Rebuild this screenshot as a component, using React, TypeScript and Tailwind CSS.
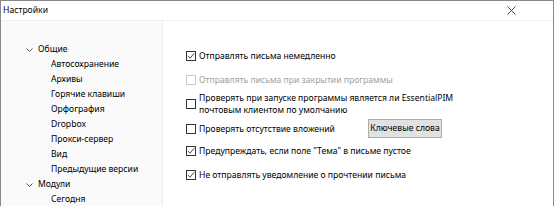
import React from "react";

const font = { fontFamily: '"Noto Sans", "Open Sans", sans-serif' };

function Check({ checked, disabled }: { checked?: boolean; disabled?: boolean }) {
  return (
    <span
      className={`flex h-[10px] w-[10px] shrink-0 items-center justify-center border bg-white ${
        disabled ? "border-[#cccccc]" : "border-[#333333]"
      }`}
    >
      {checked && (
        <svg width="8" height="8" viewBox="0 0 8 8">
          <path d="M0.8 3.8 L3 6.2 L7.3 1.2" fill="none" stroke="#333" strokeWidth="0.9" />
        </svg>
      )}
    </span>
  );
}

function Chevron() {
  return (
    <svg width="7" height="4" viewBox="0 0 7 4" className="mr-[5px]">
      <path d="M0.5 0.5 L3.5 3.5 L6.5 0.5" fill="none" stroke="#444" strokeWidth="0.9" />
    </svg>
  );
}

const general = [
  "Автосохранение",
  "Архивы",
  "Горячие клавиши",
  "Орфография",
  "Dropbox",
  "Прокси-сервер",
  "Вид",
  "Предыдущие версии",
];

export default function App() {
  return (
    <div
      className="flex h-[206px] w-[554px] flex-col overflow-hidden border-x border-t border-[#8a8a8a] bg-white text-[8.6px] text-[#000] whitespace-nowrap"
      style={font}
    >
      {/* Title bar */}
      <div className="flex h-[19px] shrink-0 items-center justify-between pl-[2px] pr-[37px]">
        <span className="leading-none">Настройки</span>
        <svg width="9" height="9" viewBox="0 0 9 9">
          <path d="M0.5 0.5 L8.5 8.5 M8.5 0.5 L0.5 8.5" stroke="#333" strokeWidth="0.9" />
        </svg>
      </div>

      <div className="flex flex-1 border-t border-[#f0f0f0]">
        {/* Tree */}
        <div className="w-[162px] shrink-0 border-r border-[#ececec] bg-[#fafafa] pl-[25px] pt-[21px] leading-[15px]">
          <div className="flex items-center">
            <Chevron />
            <span>Общие</span>
          </div>
          {general.map((g) => (
            <div key={g} className="pl-[25px]">
              {g}
            </div>
          ))}
          <div className="flex items-center">
            <Chevron />
            <span>Модули</span>
          </div>
          <div className="pl-[25px]">Сегодня</div>
        </div>

        {/* Options */}
        <div className="flex flex-1 flex-col pl-[23px] pt-[29px] leading-[12px]">
          <label className="flex items-center gap-[3px]">
            <Check checked />
            <span>Отправлять письма немедленно</span>
          </label>
          <label className="mt-[12px] flex items-center gap-[3px] text-[#a0a0a0]">
            <Check disabled />
            <span>Отправлять письма при закрытии программы</span>
          </label>
          <label className="mt-[6px] flex items-center gap-[3px]">
            <Check />
            <span>
              Проверять при запуске программы является ли EssentialPIM
              <br />
              почтовым клиентом по умолчанию
            </span>
          </label>
          <div className="mt-[3px] flex h-[19px] items-center">
            <label className="flex w-[182px] items-center gap-[3px]">
              <Check />
              <span>Проверять отсутствие вложений</span>
            </label>
            <button className="h-[19px] w-[74px] border border-[#adadad] bg-[#e1e1e1] leading-none">
              Ключевые слова
            </button>
          </div>
          <label className="mt-[7px] flex items-center gap-[3px]">
            <Check checked />
            <span>Предупреждать, если поле "Тема" в письме пустое</span>
          </label>
          <label className="mt-[12px] flex items-center gap-[3px]">
            <Check checked />
            <span>Не отправлять уведомление о прочтении письма</span>
          </label>
        </div>
      </div>
    </div>
  );
}
